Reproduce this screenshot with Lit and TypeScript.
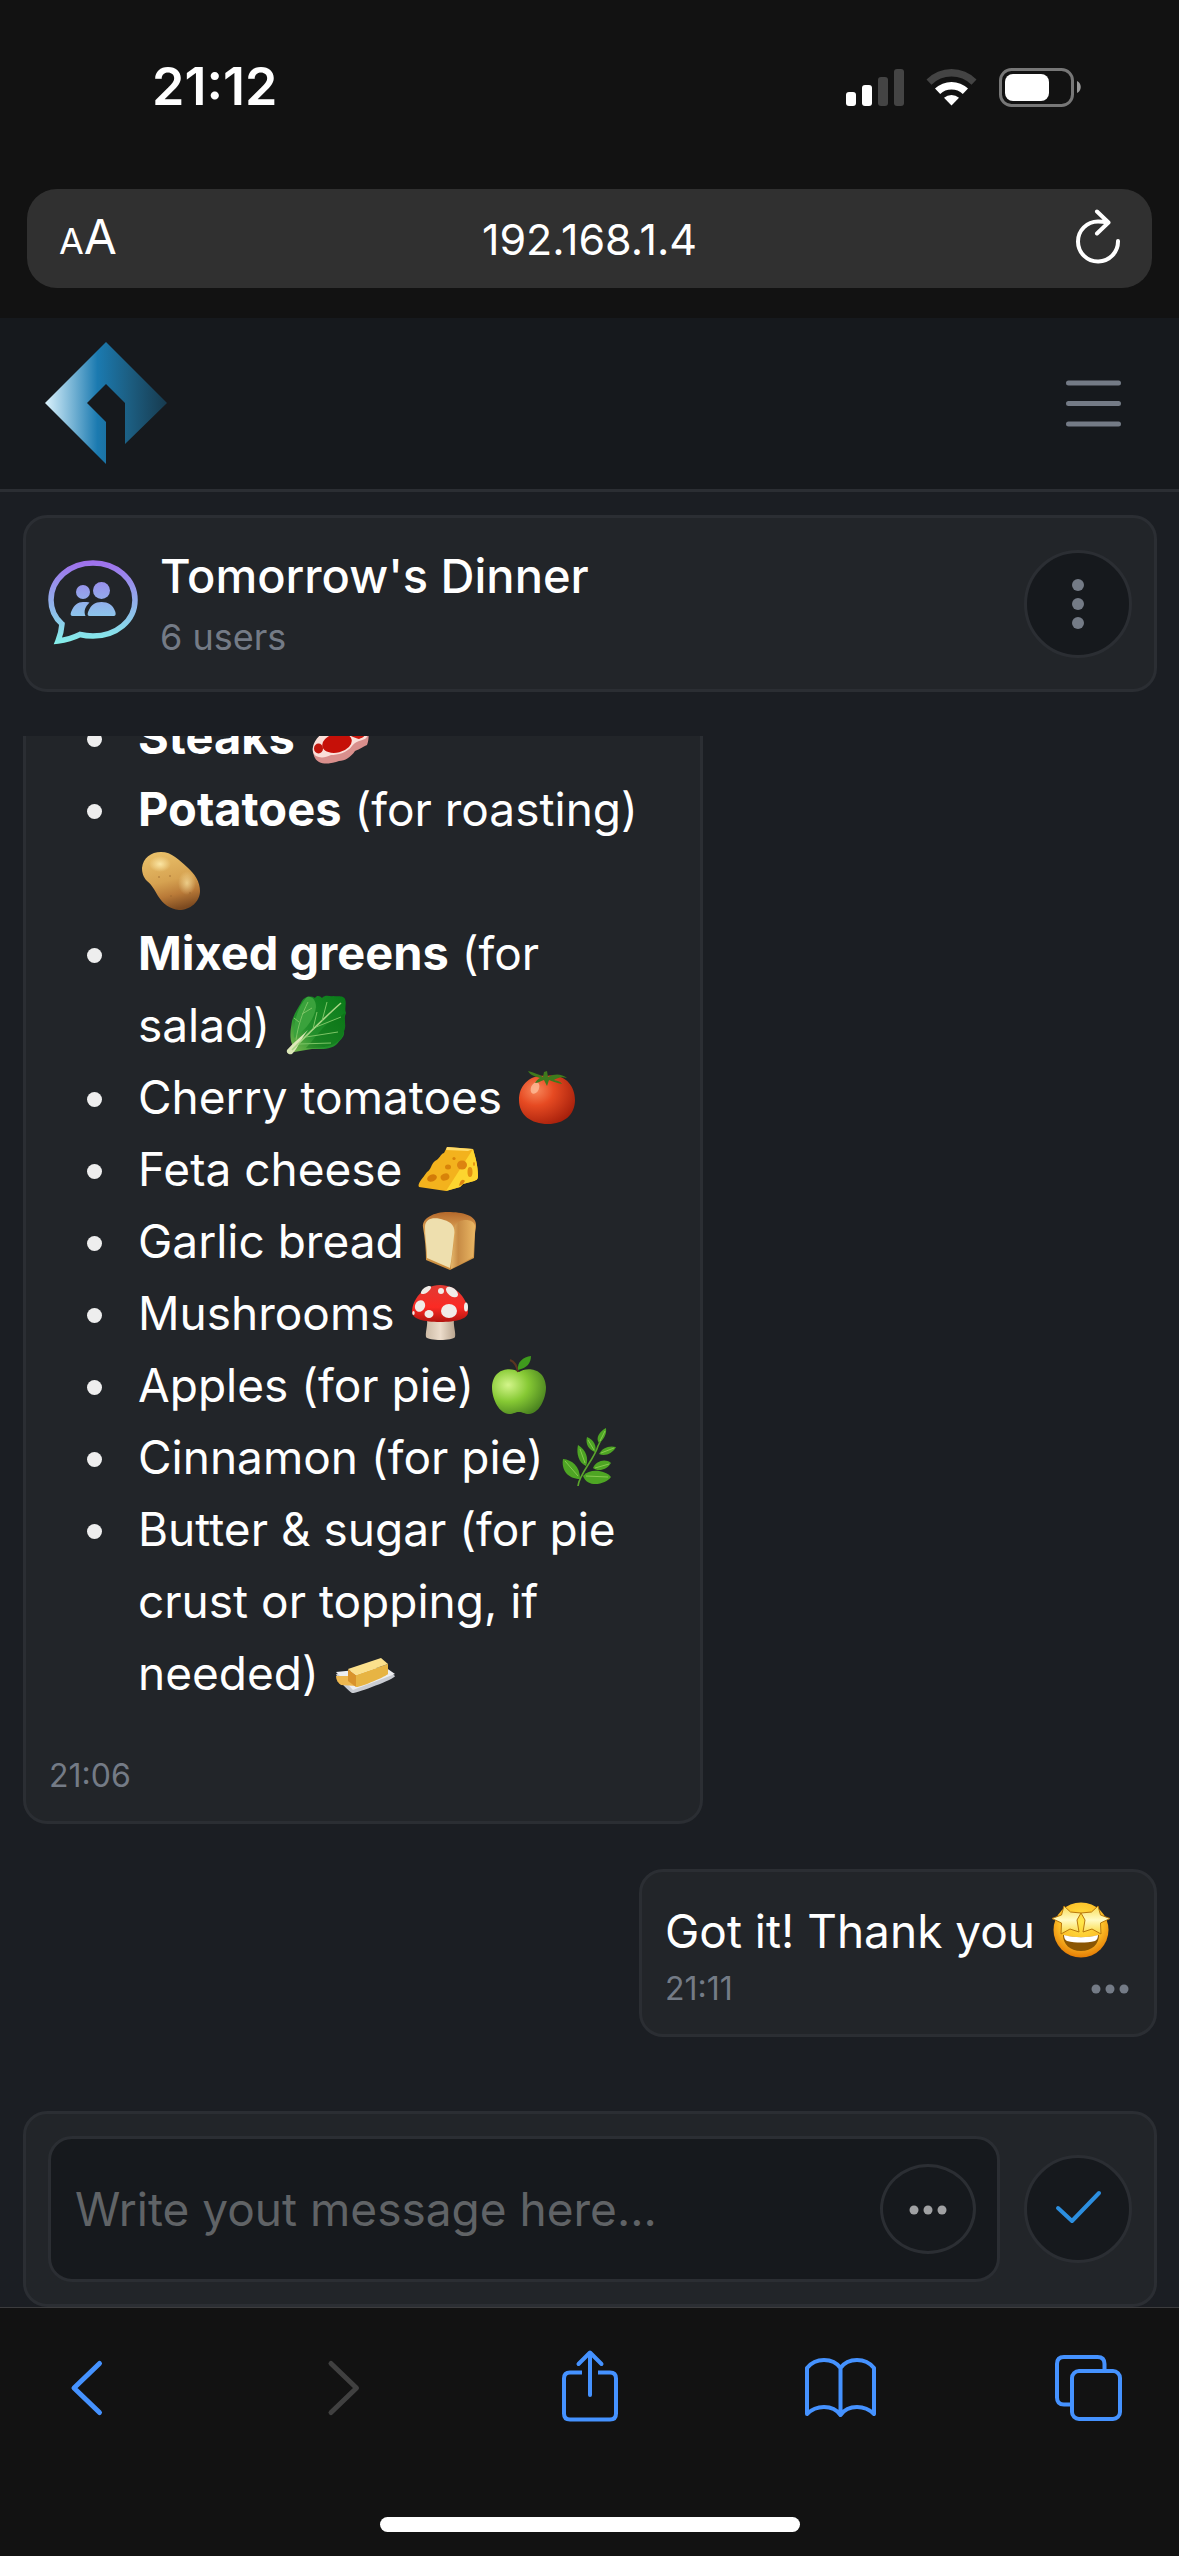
import { LitElement, html, css, svg, nothing, type TemplateResult } from "lit";
import { customElement, property } from "lit/decorators.js";

type EmojiName =
  | "steak" | "potato" | "greens" | "tomato" | "cheese" | "bread"
  | "mushroom" | "apple" | "herb" | "butter" | "starstruck";

const emojiArt: Record<EmojiName, TemplateResult> = {
  steak: svg`
    <path d="M2 42C4 30 20 22 32 14C40 6 54 8 57 20C58 28 58 34 56 39C50 42 47 44 44 45C40 51 34 55 28 55C22 57 14 59 8 56C3 53 2 48 2 42Z" fill="#d98f8c"/>
    <path d="M2 41C4 29 20 21 32 13C40 6 54 8 57 20C58 26 57 31 54 33C48 35 44 36 41 40C36 47 26 49 20 49C14 52 9 52 5 50C2 48 1 44 2 41Z" fill="#fadfd9"/>
    <ellipse cx="26" cy="37" rx="15" ry="9.500" transform="rotate(-14 26 37)" fill="#c61008"/>
    <ellipse cx="7.500" cy="42.500" rx="4.500" ry="5" fill="#c0150c"/>
    <path d="M28 22C38 12 50 12 54 22C56 28 54 31 48 33C43 32 38 28 28 27Z" fill="#cb160c"/>`,
  potato: svg`
    <defs><linearGradient id="potato" x1="0.300" y1="0" x2="0.550" y2="1">
      <stop offset="0" stop-color="#e9c069"/><stop offset="0.500" stop-color="#d6a251"/>
      <stop offset="0.750" stop-color="#b97a38"/><stop offset="1" stop-color="#7c4a20"/></linearGradient>
    <radialGradient id="potatoShine"><stop offset="0" stop-color="#fbe6a4"/><stop offset="1" stop-color="#fbe6a4" stop-opacity="0"/></radialGradient></defs>
    <path d="M20 2C31 2 38 10 46 17C54 24 59 32 59 41C59 52 49 60 38 60C29 59 22 54 17 46C13 39 11 35 6 31C2 27 1 22 1 18C2 8 10 2 20 2Z" fill="url(#potato)"/>
    <ellipse cx="19" cy="14" rx="11" ry="8" fill="url(#potatoShine)"/>
    <ellipse cx="46" cy="33" rx="9" ry="12" fill="url(#potatoShine)" opacity="0.700"/>
    <g fill="#96642e"><circle cx="29" cy="26" r="0.700"/><circle cx="18" cy="27" r="0.700"/>
    <circle cx="30" cy="46" r="0.700"/><circle cx="49" cy="43" r="0.700"/></g>`,
  greens: svg`
    <defs><linearGradient id="leaf" x1="0" y1="1" x2="1" y2="0">
      <stop offset="0" stop-color="#7fbb52"/><stop offset="0.350" stop-color="#23902c"/><stop offset="1" stop-color="#087a18"/></linearGradient></defs>
    <path d="M6 50C3 42 5 34 6 27C8 20 12 14 15 9C17 3 24 1 29 4C31 1 34 2 36 4C40 0 44 3 47 2C51 3 57 1 59 5C61 10 58 14 60 19C57 25 61 31 58 37C59 43 54 46 51 50C45 56 34 55 26 55L8 58Z" fill="url(#leaf)"/>
    <path d="M21 3C12 12 7 28 8 44C16 38 28 28 30 13C30 6 26 2 21 3Z" fill="#3aa23c"/>
    <path d="M37 34C44 27 50 25 59 19C57 25 61 31 58 37C57 44 52 48 48 50C40 54 30 54 20 54C26 47 31 41 37 34Z" fill="#06680f" opacity="0.350"/>
    <path d="M1 56C8 48 16 42 22 36C14 46 12 54 6 60C3 61 0 59 1 56Z" fill="#dde8b8"/>
    <path d="M6 56C24 38 38 24 55 9" stroke="#a8d585" stroke-width="1.600" fill="none"/>
    <path d="M10 46C12 32 16 20 22 8M27 35L31 18M36 27L41 8M30 33L55 23M20 43L52 38M13 50L45 49M13 28L8 24M16 20L26 14" stroke="#7cc465" stroke-width="1" fill="none"/>`,
  tomato: svg`
    <defs><radialGradient id="tomato" cx="0.300" cy="0.300" r="0.800">
      <stop offset="0" stop-color="#f8875a"/><stop offset="0.400" stop-color="#e64a22"/><stop offset="1" stop-color="#a51f0b"/></radialGradient></defs>
    <path d="M29 10C46 7 57 19 57 34C57 49 46 58 30 58C13 58 1 49 1 34C1 19 12 8 29 10Z" fill="url(#tomato)"/>
    <ellipse cx="17" cy="22" rx="4" ry="6" transform="rotate(25 17 22)" fill="#ffc6a4" opacity="0.700"/>
    <path d="M10 5C16 7 21 8 25 11L26 6L29 5L30 11C37 7 44 8 49 12C43 10 39 12 36 14C41 15 43 16 44 18C38 17 34 15 31 14L29 20L26 14C22 15 20 17 17 17C19 14 20 13 22 12C16 10 12 9 10 5Z" fill="#3f7a1c"/>`,
  cheese: svg`
    <path d="M29 9L55 11C57 18 60 27 60 38C60 42 58 42 56 43L45 46L42 49L28 53L1 49C-1 46 4 41 9 34C13 32 13 26 17 23C22 21 22 16 26 15Z" fill="#f3b21d"/>
    <path d="M55 11C57 18 60 27 60 38C60 42 58 42 56 43L45 46L42 49L28 53Z" fill="#fdd52f"/>
    <path d="M29 9L55 11L50 13L28 12Z" fill="#ffdc6a"/>
    <ellipse cx="14" cy="40" rx="5" ry="3.500" transform="rotate(-20 14 40)" fill="#d27a08"/>
    <ellipse cx="27" cy="39" rx="4.500" ry="3.500" transform="rotate(-20 27 39)" fill="#d88309"/>
    <ellipse cx="30" cy="29" rx="3" ry="2.500" fill="#d88309"/><circle cx="36" cy="20.500" r="1.600" fill="#d88309"/>
    <ellipse cx="44" cy="27" rx="5" ry="4.500" fill="#dd8410"/><ellipse cx="52" cy="34" rx="2.500" ry="5" fill="#e39111"/>
    <path d="M41 48C42 43 44 40 47 43L45 46Z" fill="#dd8410"/><ellipse cx="56" cy="26" rx="1" ry="2" fill="#e39111"/>`,
  bread: svg`
    <defs><linearGradient id="crust" x1="0" y1="0" x2="0" y2="1"><stop offset="0" stop-color="#b4682a"/><stop offset="0.350" stop-color="#e0a95b"/><stop offset="1" stop-color="#c98b3c"/></linearGradient>
    <linearGradient id="crustSide"><stop offset="0" stop-color="#e5b76c"/><stop offset="0.300" stop-color="#c78b45"/><stop offset="1" stop-color="#eab764"/></linearGradient></defs>
    <path d="M3 17C2 8 14 2 28 2C42 2 57 5 56 16C56 19 55 21 55 24L54 48L30 60L6 50C6 40 5 28 3 17Z" fill="url(#crust)"/>
    <path d="M35 16C38 8 54 8 55 16L53 47L31 59C31 44 36 34 35 16Z" fill="url(#crustSide)"/>
    <path d="M5 17C5 7 16 7 24 10C31 12 36 16 34 26C33 36 32 46 30 58L7 48C7 38 5 28 5 17Z" fill="#eedfae"/>`,
  mushroom: svg`
    <defs><linearGradient id="stem"><stop offset="0" stop-color="#cdbba6"/><stop offset="0.500" stop-color="#ecdccb"/><stop offset="1" stop-color="#b9a58f"/></linearGradient>
    <linearGradient id="cap" x1="0" y1="0" x2="0" y2="1"><stop offset="0" stop-color="#e03b33"/><stop offset="0.600" stop-color="#fb2a24"/><stop offset="1" stop-color="#b3140f"/></linearGradient></defs>
    <path d="M17 36H44C43 44 46 50 45 55C43 59 18 59 16 55C15 50 18 44 17 36Z" fill="url(#stem)"/>
    <path d="M30 3C47 3 58 18 58 30C58 37 46 40 30 40C14 40 2 37 2 30C2 18 13 3 30 3Z" fill="url(#cap)"/>
    <g fill="#f1ece8"><ellipse cx="10" cy="24" rx="5" ry="6" transform="rotate(25 10 24)"/><ellipse cx="39" cy="29" rx="8" ry="7"/>
    <ellipse cx="19" cy="32" rx="4.500" ry="4"/><ellipse cx="42" cy="10" rx="7" ry="4" transform="rotate(38 42 10)"/><ellipse cx="16" cy="8" rx="6" ry="2.600" transform="rotate(-35 16 8)"/>
    <circle cx="31" cy="9" r="3"/><ellipse cx="56" cy="25" rx="2" ry="4.500"/><ellipse cx="3.500" cy="31" rx="1.200" ry="2"/></g>`,
  apple: svg`
    <defs><radialGradient id="apple" cx="0.300" cy="0.350" r="0.750"><stop offset="0" stop-color="#d3f58a"/><stop offset="0.500" stop-color="#86c934"/><stop offset="1" stop-color="#4b8420"/></radialGradient></defs>
    <path d="M29 18C36 13 55 13 56 33C56 46 48 60 39 60C34 60 33 58 29 58C25 58 24 60 19 60C10 60 2 46 2 33C3 13 22 13 29 18Z" fill="url(#apple)"/>
    <path d="M20 6C25 8 27 12 28 18" stroke="#5b3521" stroke-width="2" fill="none"/>
    <path d="M28 16C27 8 33 3 41 2C41 9 37 14 28 16Z" fill="#3f9a1d"/>`,
  herb: svg`
    <path d="M18 60C19 48 34 34 38 20C40 16 42 12 44 8" stroke="#5ba52d" stroke-width="1.600" fill="none"/>
    <g fill="#4ea524"><path d="M46 2C47 9 43 14 39 17C35 12 40 5 46 2Z"/><path d="M27 11C34 14 37 20 35 26C29 24 25 18 27 11Z"/>
    <path d="M18 19C26 24 29 32 26 40C19 37 16 28 18 19Z"/><path d="M3 33C12 34 20 40 20 53C8 53 1 44 3 33Z"/>
    <path d="M56 21C53 27 45 31 39 28C42 22 49 19 56 21Z"/><path d="M51 37C47 44 38 46 33 42C36 35 45 32 51 37Z"/>
    <path d="M23 50C30 42 45 44 51 51C46 58 28 63 23 50Z"/></g>
    <g stroke="#86ca4f" stroke-width="1" fill="none"><path d="M5 35L18 50M20 23L25 37M28 14L34 24M45 5L40 15M54 22L41 27M49 38L35 42M26 50L48 51"/></g>`,
  butter: svg`
    <path d="M1 32L50 26L60 34C60 37 20 52 17 51C14 49 3 39 1 32Z" fill="#c9ccd2"/><path d="M1 30L50 25L60 32L18 48Z" fill="#eceef1"/>
    <path d="M1 34L13 34L21 44L6 43C3 41 1 38 1 34Z" fill="#eeb850"/>
    <path d="M13 27L21 33V45L13 39Z" fill="#d9932c"/><path d="M21 33L53 22V32C52 34 24 46 21 45Z" fill="#e7b443"/><path d="M13 27L46 16L53 22L21 33Z" fill="#fbe08c"/>`,
  starstruck: svg`
    <defs><radialGradient id="face" cx="0.500" cy="0.350" r="0.650"><stop offset="0" stop-color="#ffe84a"/><stop offset="0.600" stop-color="#fdc028"/><stop offset="1" stop-color="#e57d05"/></radialGradient>
    <linearGradient id="star" x1="0" y1="0" x2="0" y2="1"><stop offset="0" stop-color="#f9dc55"/><stop offset="0.500" stop-color="#fffbc4"/><stop offset="1" stop-color="#fbd83c"/></linearGradient></defs>
    <circle cx="30" cy="30" r="27.500" fill="url(#face)"/>
    <path d="M12 35C22 38 38 38 48 35C48 44 41 51 30 51C19 51 12 44 12 35Z" fill="#8a5604"/>
    <path d="M13 35C23 38 37 38 47 35C47 38 46 40 44 41C35 43 25 43 16 41C14 40 13 38 13 35Z" fill="#fff"/>
    <g fill="url(#star)" stroke="#b9780c" stroke-width="1" stroke-linejoin="round">
    <path d="M13 6L19.500 12L30 13L26 20L28 32L19 29L10 34L10.500 23L1 18.500L10.500 15Z"/>
    <path d="M47 6L40.500 12L30 13L34 20L32 32L41 29L50 34L49.500 23L59 18.500L49.500 15Z"/></g>`,
};

/** A pictogram that sits in a line of text. */
@customElement("chat-emoji")
export class ChatEmoji extends LitElement {
  @property() name: EmojiName = "apple";

  static styles = css`
    :host { display: inline-block; width: 60px; height: 60px; vertical-align: -12px; }
    .art { display: block; width: 60px; height: 60px; overflow: visible; }
  `;

  render() {
    return html`<svg class="art" viewBox="0 0 60 60" role="img" aria-label=${this.name}>${emojiArt[this.name]}</svg>`;
  }
}

interface Item {
  strong?: string;
  text?: string;
  emoji: EmojiName;
}

const shoppingList: Item[] = [
  { strong: "Steaks", emoji: "steak" },
  { strong: "Potatoes", text: "(for roasting)", emoji: "potato" },
  { strong: "Mixed greens", text: "(for salad)", emoji: "greens" },
  { text: "Cherry tomatoes", emoji: "tomato" },
  { text: "Feta cheese", emoji: "cheese" },
  { text: "Garlic bread", emoji: "bread" },
  { text: "Mushrooms", emoji: "mushroom" },
  { text: "Apples (for pie)", emoji: "apple" },
  { text: "Cinnamon (for pie)", emoji: "herb" },
  { text: "Butter & sugar (for pie crust or topping, if needed)", emoji: "butter" },
];

@customElement("app-root")
export class AppRoot extends LitElement {
  static styles = css`
    :host {
      display: flex;
      flex-direction: column;
      height: 100vh;
      overflow: hidden;
      background: #1b1e23;
      color: #fff;
      font-family: Inter, "Noto Sans", sans-serif;
      font-size: 46px;
      line-height: 72px;
      --line: #2b2e33;
      --panel: #222529;
      --deep: #16191d;
      --muted: #747b86;
      --chrome: #121212;
      --blue: #4592ff;
    }
    * { box-sizing: border-box; }
    svg { display: block; flex: none; overflow: visible; }
    button {
      display: flex;
      align-items: center;
      justify-content: center;
      flex: none;
      margin: 0;
      padding: 0;
      border: 0;
      background: none;
      color: inherit;
      font: inherit;
    }
    input {
      flex: 1;
      min-width: 0;
      margin: 0;
      padding: 0;
      border: 0;
      outline: 0;
      background: none;
      color: inherit;
      font: inherit;
    }

    .chrome-top { flex: none; padding-bottom: 30px; background: var(--chrome); }
    .status {
      display: flex;
      align-items: center;
      justify-content: space-between;
      padding: 57px 98px 72px 152px;
    }
    .clock { font-size: 52px; line-height: 60px; font-weight: 600; }
    .indicators { display: flex; align-items: center; gap: 22px; }
    .address {
      display: flex;
      align-items: center;
      height: 99px;
      margin: 0 27px;
      padding: 0 32px;
      border-radius: 30px;
      background: #303030;
    }
    .reader { align-items: baseline; justify-content: flex-start; width: 60px; font-size: 48px; line-height: 60px; }
    .reload { justify-content: flex-end; width: 60px; }
    .small-a { font-size: 36px; }
    .url { font-size: 43px; line-height: 60px; text-align: center; }

    .site-header {
      display: flex;
      align-items: center;
      justify-content: space-between;
      flex: none;
      padding: 24px 56px 25px 45px;
      border-bottom: 3px solid var(--line);
      background: var(--deep);
    }

    .panel { border: 3px solid var(--line); border-radius: 24px; background: var(--panel); }
    .room {
      display: flex;
      align-items: center;
      gap: 22px;
      flex: none;
      margin: 23px 22px 44px 23px;
      padding: 25px 22px 24px;
    }
    .room-text { flex: 1; min-width: 0; }
    .room-name { margin: 0; font-size: 47px; line-height: 66px; font-weight: 500; }
    .room-users { margin: 0; color: var(--muted); font-size: 36px; line-height: 56px; }
    .round { width: 108px; height: 108px; border: 3px solid var(--line); border-radius: 50%; background: var(--deep); }

    .messages {
      display: flex;
      flex-direction: column;
      justify-content: flex-end;
      gap: 45px;
      flex: 1;
      min-height: 0;
      padding: 0 22px 74px 23px;
      overflow: hidden;
    }
    .bubble { flex: none; max-width: 60%; padding: 23px 23px 23px; }
    .theirs { align-self: flex-start; }
    .mine { align-self: flex-end; }
    .list { margin: 0 0 45px; padding: 0 0 0 38px; list-style: none; }
    .item { display: flex; gap: 36px; }
    .item::before {
      content: "";
      flex: none;
      width: 15px;
      height: 15px;
      margin-top: 31px;
      border-radius: 50%;
      background: #eee;
    }
    .item chat-emoji { margin-left: 3px; }
    .strong { font-size: 47px; line-height: 1; font-weight: 700; }
    .said { margin: 0; padding-right: 20px; }
    .said chat-emoji { margin-left: 3px; }
    .meta {
      display: flex;
      align-items: center;
      justify-content: space-between;
      color: var(--muted);
      font-size: 32px;
      line-height: 44px;
    }

    .composer {
      display: flex;
      align-items: center;
      gap: 24px;
      flex: none;
      margin: 0 22px 0 23px;
      padding: 22px;
    }
    .field {
      display: flex;
      align-items: center;
      flex: 1;
      min-width: 0;
      height: 146px;
      padding: 0 21px 0 24px;
      border: 3px solid var(--line);
      border-radius: 24px;
      background: var(--deep);
    }
    .message-input { height: 72px; }
    .message-input::placeholder { color: #606366; opacity: 1; }
    .more { width: 96px; height: 90px; border: 3px solid var(--line); border-radius: 50%; }

    .toolbar {
      flex: none;
      padding: 42px 53px 24px;
      border-top: 1px solid #3c3c3e;
      background: var(--chrome);
    }
    .tools { display: flex; justify-content: space-between; color: var(--blue); }
    .forward:disabled { color: #404040; }
    .home { width: 420px; max-width: 50%; height: 15px; margin: 95px auto 0; border-radius: 8px; background: #fff; }
  `;

  private renderItem(item: Item) {
    return html`<li class="item"><span>${item.strong
      ? html`<strong class="strong">${item.strong}</strong>${" "}` : nothing}${item.text
      ? html`${item.text}${" "}` : nothing}<chat-emoji name=${item.emoji}></chat-emoji></span></li>`;
  }

  render() {
    return html`
      <div class="chrome-top">
        <div class="status">
          <time class="clock">21:12</time>
          <div class="indicators">
            <svg width="58" height="38" viewBox="0 0 58 38" aria-hidden="true">
              <g fill="#fff"><rect y="24" width="10" height="14" rx="3"/><rect x="16" y="17" width="10" height="21" rx="3"/></g>
              <g fill="#444"><rect x="32" y="9" width="10" height="29" rx="3"/><rect x="48" y="1" width="10" height="37" rx="3"/></g>
            </svg>
            <svg width="51" height="38" viewBox="0 0 51 38" aria-hidden="true">
              <path d="M0.500 11.500A35 35 0 0 1 50.500 11.500L45.500 16.800A28 28 0 0 0 5.500 16.800Z" fill="#444"/>
              <path d="M9 20.500A24 24 0 0 1 42 20.500L36.800 26A16.500 16.500 0 0 0 14.200 26Z" fill="#fff"/>
              <path d="M18 29.700A11.500 11.500 0 0 1 33 29.700L25.500 37.500Z" fill="#fff"/>
            </svg>
            <svg width="82" height="39" viewBox="0 0 82 39" aria-hidden="true">
              <rect x="1.500" y="1.500" width="72" height="36" rx="11" fill="none" stroke="#777" stroke-width="3"/>
              <rect x="6" y="6" width="44" height="27" rx="8" fill="#fff"/>
              <path d="M78 13C83 15 83 23 78 25Z" fill="#999"/>
            </svg>
          </div>
        </div>
        <div class="address">
          <button class="reader" aria-label="Page settings"><span class="small-a">A</span><span>A</span></button>
          <input class="url" type="text" aria-label="Address" value="192.168.1.4">
          <button class="reload" aria-label="Reload">
            <svg width="45" height="56" viewBox="0 0 45 56" fill="none" stroke="#fff" stroke-width="4" stroke-linecap="round" stroke-linejoin="round">
              <path d="M43 30A20 20 0 1 1 23 10.500C27 10.500 30 11 33 11.500M22 0.500L33.500 11.500L22 22.500"/>
            </svg>
          </button>
        </div>
      </div>

      <header class="site-header">
        <a href="#" aria-label="Home">
          <svg width="122" height="122" viewBox="0 0 122 122" aria-hidden="true">
            <defs><linearGradient id="logo">
              <stop offset="0" stop-color="#dcf3fd"/><stop offset="0.430" stop-color="#1b7ab0"/>
              <stop offset="0.700" stop-color="#1c5d80"/><stop offset="1" stop-color="#173a4e"/>
            </linearGradient></defs>
            <path d="M0 61L61 0L122 61L80 102V61L61 42L42 61L61 80V122Z" fill="url(#logo)"/>
          </svg>
        </a>
        <button aria-label="Menu">
          <svg width="58" height="48" viewBox="0 0 58 48" stroke="#747b86" stroke-width="5" stroke-linecap="round">
            <path d="M3.500 4H53.500M3.500 24.500H53.500M3.500 45H53.500"/>
          </svg>
        </button>
      </header>

      <section class="room panel">
        <svg width="90" height="90" viewBox="0 0 90 90" aria-hidden="true">
          <defs><linearGradient id="chat" gradientUnits="userSpaceOnUse" x1="0" y1="0" x2="0" y2="86">
            <stop offset="0" stop-color="#a06cec"/><stop offset="1" stop-color="#84f2ea"/>
          </linearGradient></defs>
          <path d="M14 65C6 58 3 50 3 41C3 20 22 4 45 4S87 20 87 41S68 77 45 77C40 77 36 76.500 32 75.500C25 79 18 81 10 82C12 77 13.500 72 14 65Z" fill="none" stroke="url(#chat)" stroke-width="5.500"/>
          <g fill="url(#chat)"><circle cx="35" cy="33" r="7"/><circle cx="53.500" cy="31.500" r="8.500"/>
            <path d="M41.500 57C39 57 39.500 54 40.500 52C43 46 47 43 53.500 43S65 46 67 52C68 54 68 57 66 57Z"/>
            <path d="M37.500 57H24.500C22 57 22.500 54 23.500 52C26 46 30 43 35 43C37.500 43 40 43 41.500 43.500C37 48 35.500 52 37.500 57Z"/></g>
        </svg>
        <div class="room-text">
          <h1 class="room-name">Tomorrow's Dinner</h1>
          <p class="room-users">6 users</p>
        </div>
        <button class="round" aria-label="Room options">
          <svg width="12" height="50" viewBox="0 0 12 50" fill="#747b86">
            <circle cx="6" cy="6" r="6"/><circle cx="6" cy="25" r="6"/><circle cx="6" cy="44" r="6"/>
          </svg>
        </button>
      </section>

      <main class="messages">
        <article class="bubble panel theirs">
          <ul class="list">${shoppingList.map((item) => this.renderItem(item))}</ul>
          <div class="meta"><time>21:06</time></div>
        </article>
        <article class="bubble panel mine">
          <p class="said">Got it! Thank you <chat-emoji name="starstruck"></chat-emoji></p>
          <div class="meta">
            <time>21:11</time>
            <button aria-label="Message options">
              <svg width="40" height="10" viewBox="0 0 40 10" fill="#747b86">
                <circle cx="5" cy="5" r="4.500"/><circle cx="19" cy="5" r="4.500"/><circle cx="33" cy="5" r="4.500"/>
              </svg>
            </button>
          </div>
        </article>
      </main>

      <form class="composer panel">
        <div class="field">
          <input class="message-input" type="text" aria-label="Message" placeholder="Write yout message here...">
          <button class="more" type="button" aria-label="More">
            <svg width="38" height="10" viewBox="0 0 38 10" fill="#a0a1a3">
              <circle cx="5" cy="6" r="4.500"/><circle cx="19" cy="6" r="4.500"/><circle cx="33" cy="6" r="4.500"/>
            </svg>
          </button>
        </div>
        <button class="round" type="button" aria-label="Send">
          <svg width="46" height="34" viewBox="0 0 46 34" fill="none" stroke="#2c8fe0" stroke-width="4" stroke-linecap="round" stroke-linejoin="round">
            <path d="M3 16L17 29L44 1"/>
          </svg>
        </button>
      </form>

      <footer class="toolbar">
        <nav class="tools">
          <button aria-label="Back">
            <svg width="72" height="72" viewBox="0 0 72 72" fill="none" stroke="currentColor" stroke-width="5" stroke-linecap="round" stroke-linejoin="round">
              <path d="M46.500 13.500L21 38L46.500 62.500"/>
            </svg>
          </button>
          <button class="forward" aria-label="Forward" disabled>
            <svg width="72" height="72" viewBox="0 0 72 72" fill="none" stroke="currentColor" stroke-width="5" stroke-linecap="round" stroke-linejoin="round">
              <path d="M28 13.500L53.500 38L28 62.500"/>
            </svg>
          </button>
          <button aria-label="Share">
            <svg width="72" height="72" viewBox="0 0 72 72" fill="none" stroke="currentColor" stroke-width="4" stroke-linecap="round" stroke-linejoin="round">
              <path d="M36 45V3M24.500 14L36 2.500L47.500 14"/>
              <path stroke-linecap="butt" d="M28 22.500H16Q10 22.500 10 28.500V63.500Q10 69.500 16 69.500H56Q62 69.500 62 63.500V28.500Q62 22.500 56 22.500H44"/>
            </svg>
          </button>
          <button aria-label="Bookmarks">
            <svg width="72" height="72" viewBox="0 0 72 72" fill="none" stroke="currentColor" stroke-width="4" stroke-linecap="round" stroke-linejoin="round">
              <path d="M36.500 18C33 13 27 10 20 10S7 13 3 18V64C7 60 13 57 20 57S33 60 36.500 65C40 60 46 57 53 57S66 60 70 64V18C66 13 60 10 53 10S40 13 36.500 18V64"/>
            </svg>
          </button>
          <button aria-label="Tabs">
            <svg width="72" height="72" viewBox="0 0 72 72" fill="none" stroke="currentColor" stroke-width="4">
              <rect x="18" y="21" width="48" height="48" rx="7"/>
              <path d="M17 54.500H10Q3 54.500 3 47.500V14Q3 7 10 7H43.500Q50.500 7 50.500 14V20"/>
            </svg>
          </button>
        </nav>
        <div class="home"></div>
      </footer>
    `;
  }
}
